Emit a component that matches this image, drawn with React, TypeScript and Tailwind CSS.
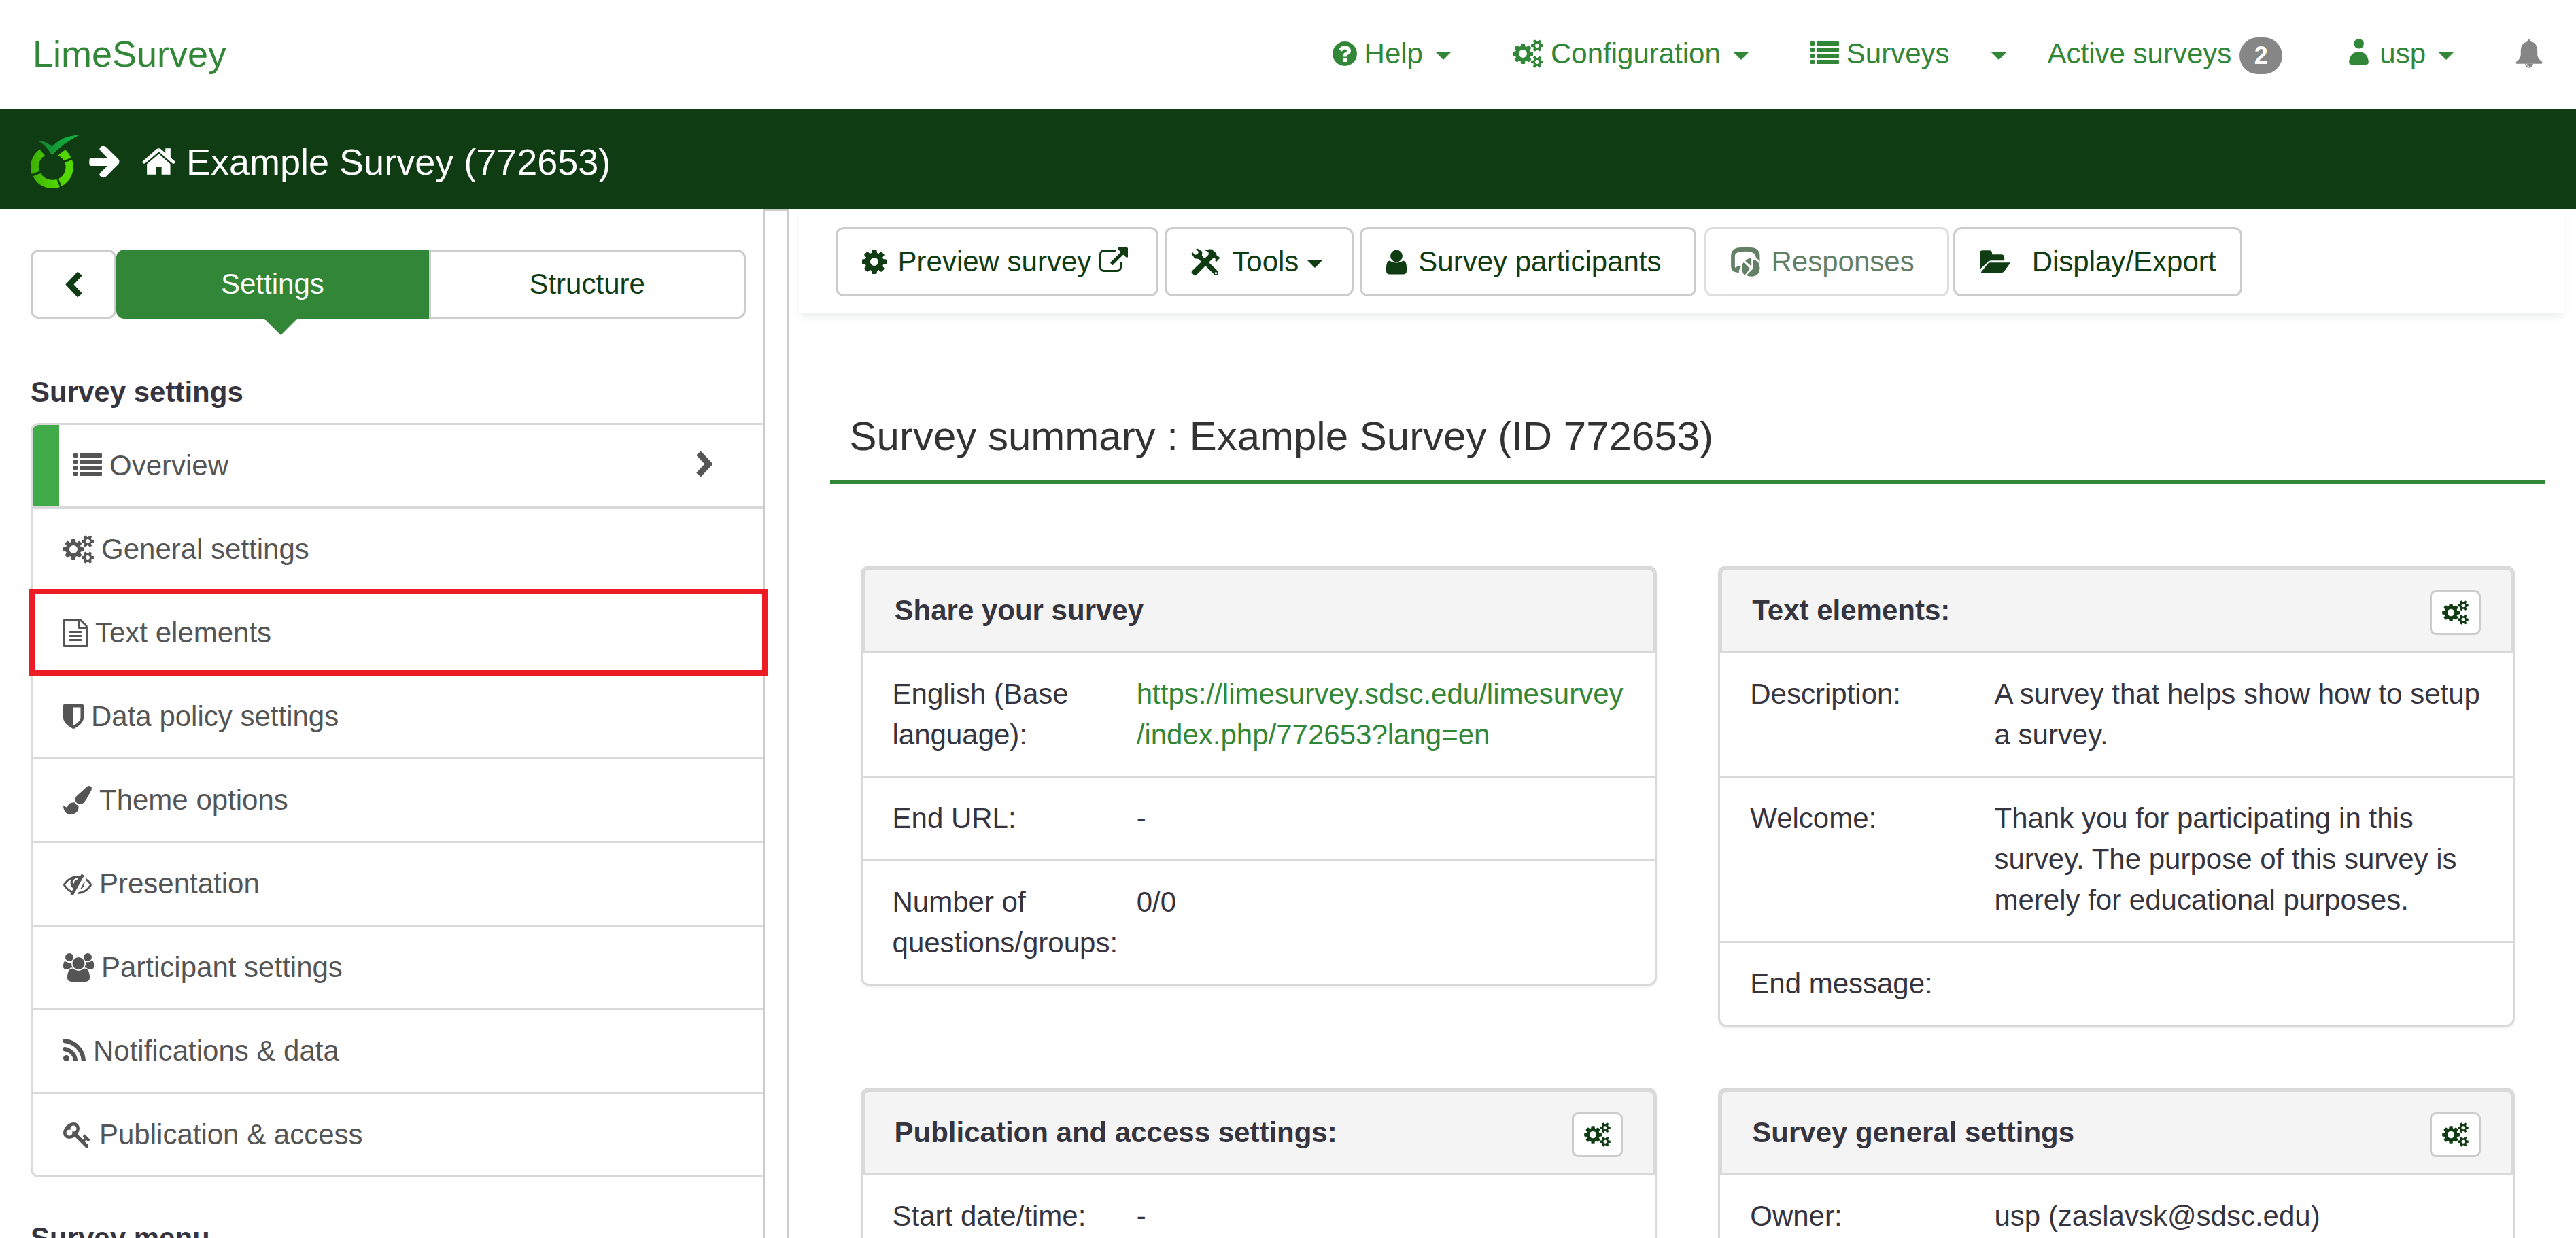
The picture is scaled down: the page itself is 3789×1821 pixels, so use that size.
import type { ReactNode } from "react";

type GlyphProps = { box: string; size: string; d: string[] };

/* Solid glyph drawn in the current text colour. */
function Glyph({ box, size, d }: GlyphProps) {
  return (
    <svg viewBox={box} className={`shrink-0 ${size}`} fill="currentColor" fillRule="evenodd" aria-hidden="true">
      {d.map((path) => (
        <path key={path} d={path} />
      ))}
    </svg>
  );
}

const SMALL_COG =
  "q0-52-38-90t-90-38-90 38-38 90q0 53 37.5 90.5t90.5 37.5 90.5-37.5 37.5-90.5z";
const SMALL_COG_RIM =
  "v140q0 16-149 31-12 27-30 52 51 113 51 138 0 4-4 7-122 71-124 71-8 0-46-47t-52-68q-20 2-30 2t-30-2q-14 21-52 68t-46 47q-2 0-124-71-4-3-4-7 0-25 51-138-18-25-30-52-149-15-149-31v-140q0-16 149-31 13-29 30-52-51-113-51-138 0-4 4-7 4-2 35-20t59-34 30-16q8 0 46 46.5t52 67.5q20-2 30-2t30 2q51-71 92-112l6-2q4 0 124 70 4 3 4 7 0 25-51 138 17 23 30 52 149 15 149 31z";
const COGS = [
  "M896 896q0-106-75-181t-181-75-181 75-75 181 75 181 181 75 181-75 75-181zm384-91v185q0 10-7 19.5t-16 10.5l-155 24q-11 35-32 76 34 48 90 115 7 11 7 20 0 12-7 19-23 30-82.5 89.5t-78.5 59.5q-11 0-21-7l-115-90q-37 19-77 31-11 108-23 155-7 24-30 24h-186q-11 0-20-7.5t-10-17.5l-23-153q-34-10-75-31l-118 89q-7 7-20 7-11 0-21-8-144-133-144-160 0-9 7-19 10-14 41-53t47-61q-23-44-35-82l-152-24q-10-1-17-9.5t-7-19.5v-185q0-10 7-19.5t16-10.5l155-24q11-35 32-76-34-48-90-115-7-11-7-20 0-12 7-20 22-30 82-89t79-59q11 0 21 7l115 90q34-18 77-32 11-108 23-154 7-24 30-24h186q11 0 20 7.5t10 17.5l23 153q34 10 75 31l118-89q8-7 20-7 11 0 21 8 144 133 144 160 0 8-7 19-12 16-42 54t-45 60q23 48 34 82l152 23q10 2 17 10.5t7 19.5z",
  `M1664 1408${SMALL_COG}M1920 1338${SMALL_COG_RIM}`,
  `M1664 384${SMALL_COG}M1920 314${SMALL_COG_RIM}`,
];

const CogsIcon = () => <Glyph box="0 0 1920 1792" size="w-[45px] h-[42px]" d={COGS} />;
const CogsSmallIcon = () => <Glyph box="0 0 1920 1792" size="w-[39px] h-[36px]" d={COGS} />;
const ListIcon = () => (
  <svg viewBox="0 0 42 42" className="h-[42px] w-[42px] shrink-0" fill="currentColor" aria-hidden="true">
    {[3, 12, 21, 30].map((y) => (
      <g key={y}>
        <rect x="0" y={y} width="6" height="6" rx="1" />
        <rect x="9" y={y} width="33" height="6" rx="1" />
      </g>
    ))}
  </svg>
);
const FileIcon = () => (
  <Glyph
    box="128 0 1536 1792"
    size="w-[36px] h-[42px]"
    d={[
      "M1596 380q28 28 48 76t20 88v1152q0 40-28 68t-68 28h-1344q-40 0-68-28t-28-68v-1600q0-40 28-68t68-28h896q40 0 88 20t76 48zm-444-244v376h376q-10-29-22-41l-313-313q-12-12-41-22zm384 1528v-1024h-416q-40 0-68-28t-28-68v-416h-768v1536h1280zm-1024-864q0-14 9-23t23-9h704q14 0 23 9t9 23v64q0 14-9 23t-23 9h-704q-14 0-23-9t-9-23v-64zm736 224q14 0 23 9t9 23v64q0 14-9 23t-23 9h-704q-14 0-23-9t-9-23v-64q0-14 9-23t23-9h704zm0 256q14 0 23 9t9 23v64q0 14-9 23t-23 9h-704q-14 0-23-9t-9-23v-64q0-14 9-23t23-9h704z",
    ]}
  />
);
const ShieldIcon = () => (
  <Glyph
    box="256 0 1280 1792"
    size="w-[30px] h-[42px]"
    d={[
      "M1344 960v-640h-448v1137q119-63 213-137 235-184 235-360zm192-768v768q0 86-33.5 170.5t-83 150-118 127.5-126.5 103-121 77.5-89.5 49.5-42.5 20q-12 6-26 6t-26-6q-16-7-42.5-20t-89.5-49.5-121-77.5-126.5-103-118-127.5-83-150-33.5-170.5v-768q0-26 19-45t45-19h1152q26 0 45 19t19 45z",
    ]}
  />
);
const BrushIcon = () => (
  <Glyph
    box="0 0 1792 1792"
    size="w-[42px] h-[42px]"
    d={[
      "M1615 0q70 0 122.5 46.5t52.5 116.5q0 63-45 151-332 629-465 752-97 91-218 91-126 0-216.5-92.5t-90.5-219.5q0-128 92-212l638-579q59-54 130-54zm-909 1034q39 76 106.5 130t150.5 76l1 71q4 213-129.5 347t-348.5 134q-123 0-218-46.5t-152.5-127.5-86.5-183-29-220q7 5 41 30t62 44.5 59 36.5 46 17q41 0 55-37 25-66 57.5-112.5t69.5-76 88-47.5 103-25.5 125-10.5z",
    ]}
  />
);
const EyeSlashIcon = () => (
  <Glyph
    box="0 0 1792 1792"
    size="w-[42px] h-[42px]"
    d={[
      "M555 1335l78-141q-87-63-136-159t-49-203q0-121 61-225-229 117-381 353 167 258 427 375zm389-759q0-20-14-34t-34-14q-125 0-214.5 89.5t-89.5 214.5q0 20 14 34t34 14 34-14 14-34q0-86 61-147t147-61q20 0 34-14t14-34zm363-191q0 7-1 9-106 189-316 567t-315 566l-49 89q-10 16-28 16-12 0-134-70-16-10-16-28 0-12 44-87-143-65-263.5-173t-208.5-245q-20-31-20-69t20-69q153-235 380-371t496-136q89 0 180 17l54-97q10-16 28-16 5 0 18 6t31 15.5 33 18.5 31.5 18.5 19.5 11.5q16 10 16 27zm37 447q0 139-79 253.5t-209 164.5l280-502q8 45 8 84zm448 128q0 35-20 69-39 64-109 145-150 172-347.5 267t-419.5 95l74-132q212-18 392.5-137t301.5-307q-115-179-282-294l63-112q95 64 182.5 153t144.5 184q20 34 20 69z",
    ]}
  />
);
const UsersIcon = () => (
  <Glyph
    box="64 0 1920 1792"
    size="w-[45px] h-[42px]"
    d={[
      "M657 896q-162 5-265 128h-134q-82 0-138-40.5t-56-118.5q0-353 124-353 6 0 43.5 21t97.5 42.5 119 21.5q67 0 133-23-5 37-5 66 0 159 93 290z",
      "M1728 1533q0 120-73 189.5t-194 69.5h-874q-121 0-194-69.5t-73-189.5q0-53 3.5-103.5t14-109 26.5-108.5 43-97.5 62-81 85.5-53.5 111.5-20q10 0 43 21.5t73 48 107 48 135 21.5 135-21.5 107-48 73-48 43-21.5q61 0 111.5 20t85.5 53.5 62 81 43 97.5 26.5 108.5 14 109 3.5 103.5z",
      "M704 256q0 106-75 181t-181 75-181-75-75-181 75-181 181-75 181 75 75 181z",
      "M1408 640q0 159-112.5 271.5t-271.5 112.5-271.5-112.5-112.5-271.5 112.5-271.5 271.5-112.5 271.5 112.5 112.5 271.5z",
      "M1984 865q0 78-56 118.5t-138 40.5h-134q-103-123-265-128 93-131 93-290 0-29-5-66 66 23 133 23 59 0 119-21.5t97.5-42.5 43.5-21q124 0 124 353z",
      "M1856 256q0 106-75 181t-181 75-181-75-75-181 75-181 181-75 181 75 75 181z",
    ]}
  />
);
const RssIcon = () => (
  <Glyph
    box="192 0 1408 1792"
    size="w-[33px] h-[42px]"
    d={[
      "M576 1344q0 80-56 136t-136 56-136-56-56-136 56-136 136-56 136 56 56 136zm512 123q2 28-17 48-18 21-47 21h-135q-25 0-43-16.5t-20-41.5q-22-229-184.5-391.5t-391.5-184.5q-25-2-41.5-20t-16.5-43v-135q0-29 21-47 17-17 43-17h5q160 13 306 80.5t259 181.5q114 113 181.5 259t80.5 306zm512 2q2 27-18 47-18 20-46 20h-143q-26 0-44.5-17.5t-19.5-42.5q-12-215-101-408.5t-231.5-336-336-231.5-408.5-102q-25-1-42.5-19.5t-17.5-43.5v-143q0-28 20-46 18-18 44-18h3q262 13 501.5 120t425.5 294q187 186 294 425.5t120 501.5z",
    ]}
  />
);
const KeyIcon = () => (
  <Glyph
    box="0 0 1792 1792"
    size="w-[42px] h-[42px]"
    d={[
      "M832 512q0-80-56-136t-136-56-136 56-56 136q0 42 19 83-41-19-83-19-80 0-136 56t-56 136 56 136 136 56 136-56 56-136q0-42-19-83 41 19 83 19 80 0 136-56t56-136zm851 704q0 17-49 66t-66 49q-9 0-28.5-16t-36.5-33-38.5-40-24.5-26l-96 96 220 220q28 28 28 68 0 42-39 81t-81 39q-40 0-68-28l-671-671q-176 131-365 131-163 0-265.5-102.5t-102.5-265.5q0-160 95-313t248-248 313-95q163 0 265.5 102.5t102.5 265.5q0 189-131 365l355 355 96-96q-3-3-26-24.5t-40-38.5-33-36.5-16-28.5q0-17 49-66t66-49q13 0 23 10 6 6 46 44.5t82 79.5 86.5 86 73 78 28.5 41z",
    ]}
  />
);
const HelpIcon = () => (
  <Glyph
    box="128 0 1536 1792"
    size="w-[36px] h-[42px]"
    d={[
      "M1024 1376v-192q0-14-9-23t-23-9h-192q-14 0-23 9t-9 23v192q0 14 9 23t23 9h192q14 0 23-9t9-23zm256-672q0-88-55.5-163t-138.5-116-170-41q-243 0-371 213-15 24 8 42l132 100q7 6 19 6 16 0 25-12 53-68 86-92 34-24 86-24 48 0 85.5 26t37.5 59q0 38-20 61t-68 45q-63 28-115.5 86.5t-52.5 125.5v36q0 14 9 23t23 9h192q14 0 23-9t9-23q0-19 21.5-49.5t54.5-49.5q32-18 49-28.5t46-35 44.5-48 28-60.5 12.5-81zm384 192q0 209-103 385.5t-279.5 279.5-385.5 103-385.5-103-279.5-279.5-103-385.5 103-385.5 279.5-279.5 385.5-103 385.5 103 279.5 279.5 103 385.5z",
    ]}
  />
);
const CogIcon = () => (
  <Glyph
    box="128 0 1536 1792"
    size="w-[36px] h-[42px]"
    d={[
      "M1152 896q0-106-75-181t-181-75-181 75-75 181 75 181 181 75 181-75 75-181zm512-109v222q0 12-8 23t-20 13l-185 28q-19 54-39 91 35 50 107 138 10 12 10 25t-9 23q-27 37-99 108t-94 71q-12 0-26-9l-138-108q-44 23-91 38-16 136-29 186-7 28-36 28h-222q-14 0-24.5-8.5t-11.5-21.5l-28-184q-49-16-90-37l-141 107q-10 9-25 9-14 0-25-11-126-114-165-168-7-10-7-23 0-12 8-23 15-21 51-66.5t54-70.5q-27-50-41-99l-183-27q-13-2-21-12.5t-8-23.5v-222q0-12 8-23t19-13l186-28q14-46 39-92-40-57-107-138-10-12-10-24 0-10 9-23 26-36 98.5-107.5t94.5-71.5q13 0 26 10l138 107q44-23 91-38 16-136 29-186 7-28 36-28h222q14 0 24.5 8.5t11.5 21.5l28 184q49 16 90 37l142-107q9-9 24-9 13 0 25 10 129 119 165 170 7 8 7 22 0 12-8 23-15 21-51 66.5t-54 70.5q26 50 41 98l183 28q13 2 21 12.5t8 23.5z",
    ]}
  />
);
const ExternalIcon = () => (
  <Glyph
    box="0 0 1792 1792"
    size="w-[42px] h-[42px]"
    d={[
      "M1408 928v320q0 119-84.5 203.5t-203.5 84.5h-832q-119 0-203.5-84.5t-84.5-203.5v-832q0-119 84.5-203.5t203.5-84.5h704q14 0 23 9t9 23v64q0 14-9 23t-23 9h-704q-66 0-113 47t-47 113v832q0 66 47 113t113 47h832q66 0 113-47t47-113v-320q0-14 9-23t23-9h64q14 0 23 9t9 23zm384-864v512q0 26-19 45t-45 19-45-19l-176-176-652 652q-10 10-23 10t-23-10l-114-114q-10-10-10-23t10-23l652-652-176-176q-19-19-19-45t19-45 45-19h512q26 0 45 19t19 45z",
    ]}
  />
);
const ToolsIcon = () => (
  <Glyph
    box="337 20 128 144"
    size="w-[43px] h-[48px]"
    d={[
      "M397 42Q410 35 428 37L447 54L450 66L456 68L464 75L448 92L443 89L444 79L436 74L430 79L359 151Q354 154 350 151L339 141Q337 137 340 133L413 61Q416 52 410 47Z",
      "M362 33L370 37L386 47L384 66L401 82L390 100L369 80L352 78L338 55L343 50L353 62L365 58L370 48L358 38Z",
      "M411 92L454 133Q460 140 454 148Q447 156 439 149L397 107ZM441 142a5 5 0 1 0 10 0a5 5 0 1 0 -10 0Z",
    ]}
  />
);
const ParticipantIcon = () => (
  <Glyph
    box="1197 47 90 110"
    size="w-[30px] h-[37px]"
    d={[
      "M1215 75a27 27 0 1 0 54 0a27 27 0 1 0 -54 0Z",
      "M1211 96Q1197 100 1197 125v16q0 15 15 15h60q15 0 15-15v-16q0-25-14-29q-14 9-31 9t-31-9z",
    ]}
  />
);
const ResponsesIcon = () => (
  <Glyph
    box="45 27 128 129"
    size="w-[43px] h-[43px]"
    d={[
      "M45 65Q45 27 90 27H128Q172 27 172 65V90Q163 78 155 72Q154 44 108 44Q62 44 62 64V114Q64 118 68 114Q75 106 88 110V114L80 128V138Q64 140 53 130Q45 123 45 110z",
      "M94 128Q89 108 100 93L129 121L105 150Q96 140 94 128z",
      "M108 86Q118 74 135 74V110z",
      "M142 80Q172 86 172 117Q170 155 135 155Q122 155 113 150L142 121z",
    ]}
  />
);
const FolderIcon = () => (
  <Glyph
    box="1142 47 134 102"
    size="w-[45px] h-[34px]"
    d={[
      "M1142 60q0-12 12-12h28q14 0 14 13v5h40q14 0 14 14v13h-55q-14 0-22 10l-31 29z",
      "M1187 102h87q2 0 1 3l-26 36q-5 6-14 6h-86q-3 0-1-4l28-35q4-6 11-6z",
    ]}
  />
);
const HomeIcon = () => (
  <Glyph
    box="537 114 147 118"
    size="w-[49px] h-[39px]"
    d={[
      "M539 172L599 119q11-9 23 0L640 135V115h23v40L682 172q3 5-2 9q-4 4-9 0L611 130L550 181q-6 3-9 0q-6-4-2-9z",
      "M611 139L662 184v47h-39v-34h-25v34h-40v-47z",
    ]}
  />
);
const ArrowIcon = () => (
  <Glyph
    box="303 107 136 143"
    size="w-[45px] h-[48px]"
    d={[
      "M318 160H384L353 129q-8-9 2-17q12-8 24 1L434 167q7 11 0 21L380 243q-12 10-24 2q-11-8-4-17L384 197H318q-14 0-14-11v-15q0-11 14-11z",
    ]}
  />
);
const PersonIcon = () => (
  <Glyph
    box="72 47 87 115"
    size="w-[29px] h-[38px]"
    d={[
      "M94 69a22 22 0 1 0 44 0a22 22 0 1 0 -44 0Z",
      "M72 150Q76 106 116 105Q155 106 159 150q0 12-12 12H84q-12 0-12-12z",
    ]}
  />
);
const BellIcon = () => (
  <svg viewBox="811 51 118 127" className="h-[42px] w-[40px] shrink-0" fill="currentColor" aria-hidden="true">
    <path d="M870 51q7 0 7 9q29 6 30 38v22q2 18 20 29q5 8-2 10H815q-7-2-2-9q20-14 20-32v-20q1-31 30-38q0-9 7-9z" />
    <path d="M852 159a18 18 0 0 0 36 0z" />
    <path d="M859 160q1 10 11 11" fill="none" stroke="#fff" strokeWidth="3" />
  </svg>
);
const Caret = () => (
  <svg viewBox="0 0 24 12" className="mt-[6px] h-[12px] w-[24px] shrink-0" fill="currentColor" aria-hidden="true">
    <path d="M0 0h24L12 12z" />
  </svg>
);
function Chevron({ flip = false }: { flip?: boolean }) {
  return (
    <svg viewBox="0 0 25 39" className="h-[39px] w-[25px] shrink-0" fill="none" stroke="currentColor" strokeWidth="9" aria-hidden="true">
      <path d={flip ? "M21.5 3.5L6.5 19.5L21.5 35.5" : "M3.5 3.5L18.5 19.5L3.5 35.5"} />
    </svg>
  );
}
const Logo = () => (
  <svg viewBox="45 57 213 234" className="h-[78px] w-[71px] shrink-0" role="img" aria-label="LimeSurvey logo">
    <defs>
      <linearGradient id="ring" x1="45" y1="0" x2="234" y2="0" gradientUnits="userSpaceOnUse">
        <stop offset="0" stopColor="#3cae00" />
        <stop offset="0.6" stopColor="#50d400" />
        <stop offset="1" stopColor="#54d800" />
      </linearGradient>
      <linearGradient id="tick" x1="78" y1="0" x2="220" y2="0" gradientUnits="userSpaceOnUse">
        <stop offset="0" stopColor="#18822a" />
        <stop offset="1" stopColor="#10b040" />
      </linearGradient>
    </defs>
    <g fill="url(#ring)">
      <path d="M85 119A95 95 0 0 0 50 228L84 215A57 57 0 0 1 108 146Z" />
      <path d="M55 238A95 95 0 0 0 174 285L160 251A57 57 0 0 1 90 224Z" />
      <path d="M182 281A95 95 0 0 0 228 165L196 178A57 57 0 0 1 168 249Z" />
      <path d="M223 157A95 95 0 0 0 198 121L165 146A57 57 0 0 1 192 168Z" />
    </g>
    <path fill="url(#tick)" d="M78 82Q110 80 139 107Q190 56 258 57Q190 90 139 145Q112 100 78 82z" />
  </svg>
);

function TopBar() {
  return (
    <header className="flex h-[160px] items-center justify-between bg-white pr-[49px] pb-[2px] pl-[48px] text-[#328637]">
      <a href="#home" className="text-[54px] leading-[60px]">
        LimeSurvey
      </a>
      <nav className="flex items-center">
        <button type="button" className="flex items-center gap-[18px]">
          <span className="flex items-center gap-[11px]">
            <HelpIcon />
            Help
          </span>
          <Caret />
        </button>
        <button type="button" className="ml-[90px] flex items-center gap-[18px]">
          <span className="flex items-center gap-[11px]">
            <CogsIcon />
            Configuration
          </span>
          <Caret />
        </button>
        <a href="#surveys" className="ml-[90px] flex items-center gap-[11px]">
          <ListIcon />
          Surveys
        </a>
        <button type="button" aria-label="Surveys menu" className="ml-[60px] flex h-[60px] items-center">
          <Caret />
        </button>
        <a href="#active" className="ml-[60px] flex items-center gap-[12px]">
          Active surveys
          <span className="mt-[6px] flex h-[54px] w-[63px] items-center justify-center rounded-full bg-[#868686] text-[36px] font-bold text-white">
            2
          </span>
        </a>
        <button type="button" className="ml-[98px] flex items-center gap-[18px]">
          <span className="flex items-center gap-[16px]">
            <span className="pb-[6px]">
              <PersonIcon />
            </span>
            usp
          </span>
          <Caret />
        </button>
        <button type="button" aria-label="Notifications" className="ml-[90px] text-[#868686]">
          <BellIcon />
        </button>
      </nav>
    </header>
  );
}

function TitleBar() {
  return (
    <div className="flex h-[147px] items-center bg-[#103c14] pt-2 pl-[45px] text-white">
      <Logo />
      <span className="ml-[15px]">
        <ArrowIcon />
      </span>
      <h1 className="ml-[33px] flex items-center gap-[16px] text-[54px] leading-[60px]">
        <HomeIcon />
        Example Survey (772653)
      </h1>
    </div>
  );
}

const menu: { label: string; icon: ReactNode; active?: boolean; marked?: boolean }[] = [
  { label: "Overview", icon: <ListIcon />, active: true },
  { label: "General settings", icon: <CogsIcon /> },
  { label: "Text elements", icon: <FileIcon />, marked: true },
  { label: "Data policy settings", icon: <ShieldIcon /> },
  { label: "Theme options", icon: <BrushIcon /> },
  { label: "Presentation", icon: <EyeSlashIcon /> },
  { label: "Participant settings", icon: <UsersIcon /> },
  { label: "Notifications & data", icon: <RssIcon /> },
  { label: "Publication & access", icon: <KeyIcon /> },
];

function Sidebar() {
  return (
    <aside className="w-[29.6%] shrink-0 pt-[60px] pl-[45px]">
      <div className="mr-[25px] flex h-[102px] text-[#103c14]">
        <button
          type="button"
          aria-label="Collapse"
          className="flex w-[126px] shrink-0 items-center justify-center rounded-[12px] border-[3px] border-[#ccc]"
        >
          <Chevron flip />
        </button>
        <button type="button" className="relative flex-1 rounded-l-[12px] bg-[#328637] text-white">
          Settings
          <svg
            viewBox="0 0 48 24"
            className="absolute top-full left-1/2 h-[24px] w-[48px] -translate-x-1/4 fill-[#328637]"
            aria-hidden="true"
          >
            <path d="M0 0h48L24 24z" />
          </svg>
        </button>
        <button type="button" className="flex-1 rounded-r-[12px] border-[3px] border-[#ccc]">
          Structure
        </button>
      </div>
      <h2 className="mt-[78px] font-bold text-[#35343f]">Survey settings</h2>
      <ul className="mt-[15px] rounded-l-[12px] border-[3px] border-r-0 border-[#d9d9d9] text-[#555]">
        {menu.map((item, i) => (
          <li key={item.label} className={i > 0 ? "relative border-t-[3px] border-[#d9d9d9]" : "relative"}>
            <a
              href="#menu"
              className={
                item.active
                  ? "flex h-[120px] items-center gap-[11px] rounded-tl-[9px] border-l-[39px] border-[#41ab49] pr-[73px] pl-[21px]"
                  : "flex h-[120px] items-center gap-[11px] pl-[45px]"
              }
            >
              {item.icon}
              {item.label}
              {item.active && (
                <span className="ml-auto pb-[5px]">
                  <Chevron />
                </span>
              )}
            </a>
            {item.marked && (
              <span className="pointer-events-none absolute -top-[5px] -right-[7px] -bottom-[3px] -left-[5px] z-10 border-[8px] border-[#ed1c24]" />
            )}
          </li>
        ))}
      </ul>
      <h2 className="mt-[59px] font-bold text-[#35343f]">Survey menu</h2>
    </aside>
  );
}

function ToolButton({ children, className = "" }: { children: ReactNode; className?: string }) {
  return (
    <button
      type="button"
      className={`flex h-[102px] items-center gap-[17px] rounded-[12px] border-[3px] border-[#ccc] pl-[36px] text-[#103c14] ${className}`}
    >
      {children}
    </button>
  );
}

function Toolbar() {
  return (
    <div className="mr-[17px] ml-[14px] flex pt-[27px] pb-[24px] pl-[54px] shadow-[0_9px_12px_-3px_rgba(40,80,60,0.10)]">
      <ToolButton className="pr-[42px]">
        <CogIcon />
        <span className="flex items-center gap-[12px]">
          Preview survey
          <ExternalIcon />
        </span>
      </ToolButton>
      <ToolButton className="ml-[9px] pr-[42px]">
        <ToolsIcon />
        <span className="flex items-center gap-[12px]">
          Tools
          <Caret />
        </span>
      </ToolButton>
      <ToolButton className="ml-[9px] pr-[48px]">
        <ParticipantIcon />
        Survey participants
      </ToolButton>
      <ToolButton className="ml-[12px] pr-[48px] opacity-65">
        <ResponsesIcon />
        Responses
      </ToolButton>
      <ToolButton className="ml-[6px] pr-[36px]">
        <FolderIcon />
        <span className="pl-[15px]">Display/Export</span>
      </ToolButton>
    </div>
  );
}

type CardProps = { title: string; settings?: boolean; rows: [string, ReactNode][] };

function Card({ title, settings, rows }: CardProps) {
  return (
    <section className="self-start rounded-[12px] border-[3px] border-[#d9d9d9] shadow-[0_3px_3px_rgba(0,0,0,0.05)]">
      <div className="flex h-[126px] items-start justify-between rounded-t-[9px] border-[3px] border-[#d9d9d9] bg-[#f4f4f4] px-[44px] pt-[30px]">
        <h3 className="font-bold">{title}</h3>
        {settings && (
          <button
            type="button"
            aria-label={`${title} settings`}
            className="flex h-[66px] w-[75px] items-center justify-center rounded-[9px] border-[3px] border-[#ccc] bg-white text-[#103c14]"
          >
            <CogsSmallIcon />
          </button>
        )}
      </div>
      <dl>
        {rows.map(([label, value], i) => (
          <div
            key={label}
            className={
              i > 0
                ? "grid grid-cols-3 border-t-[3px] border-[#d9d9d9] px-[44px] py-[30px]"
                : "grid grid-cols-3 px-[44px] py-[30px]"
            }
          >
            <dt>{label}</dt>
            <dd className="col-span-2">{value}</dd>
          </div>
        ))}
      </dl>
    </section>
  );
}

export default function App() {
  return (
    <div className="flex h-screen flex-col overflow-hidden bg-white font-['Liberation_Sans',Arial,sans-serif] text-[42px] leading-[60px] text-[#35343f]">
      <TopBar />
      <TitleBar />
      <div className="flex min-h-0 flex-1">
        <Sidebar />
        <div className="w-[39px] shrink-0 border-[3px] border-b-0 border-[#ccc]" />
        <main className="min-w-0 flex-1">
          <Toolbar />
          <div className="mr-[45px] ml-[60px]">
            <h2 className="mt-[149px] border-b-[6px] border-[#328637] pb-[31px] pl-[29px] text-[60px] leading-[66px] text-[#333]">
              Survey summary : Example Survey (ID 772653)
            </h2>
            <div className="mt-[120px] grid grid-cols-2 gap-[90px] px-[45px]">
              <Card
                title="Share your survey"
                rows={[
                  [
                    "English (Base language):",
                    <a key="link" href="#survey" className="text-[#328637]">
                      https://limesurvey.sdsc.edu/limesurvey
                      <wbr />
                      /index.php/772653?lang=en
                    </a>,
                  ],
                  ["End URL:", "-"],
                  ["Number of questions/groups:", "0/0"],
                ]}
              />
              <Card
                title="Text elements:"
                settings
                rows={[
                  ["Description:", "A survey that helps show how to setup a survey."],
                  [
                    "Welcome:",
                    "Thank you for participating in this survey. The purpose of this survey is merely for educational purposes.",
                  ],
                  ["End message:", ""],
                ]}
              />
              <Card title="Publication and access settings:" settings rows={[["Start date/time:", "-"]]} />
              <Card title="Survey general settings" settings rows={[["Owner:", "usp (zaslavsk@sdsc.edu)"]]} />
            </div>
          </div>
        </main>
      </div>
    </div>
  );
}
